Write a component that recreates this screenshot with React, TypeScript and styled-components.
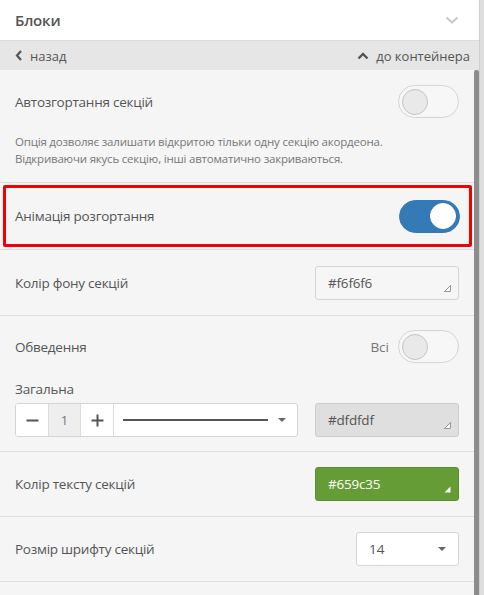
import React from "react";
import styled, { createGlobalStyle } from "styled-components";

const Global = createGlobalStyle`
  html, body { margin: 0; padding: 0; background: #f5f5f5; }
  body { font-family: "Open Sans", "Noto Sans", sans-serif; color: #555; }
  * { box-sizing: border-box; }
`;

const Frame = styled.div`
  width: 484px;
  height: 595px;
  display: flex;
  overflow: hidden;
  background: #f5f5f5;
`;

const MainCol = styled.div`
  width: 479px;
  display: flex;
  flex-direction: column;
`;

const EdgeStrip = styled.div`
  width: 5px;
  background: #dedede;
  border-left: 1px solid #cfcfcf;
`;

const Header = styled.div`
  height: 41px;
  background: #fff;
  border-bottom: 1px solid #dcdcdc;
  display: flex;
  align-items: center;
  justify-content: space-between;
  padding: 0 20px 0 15px;
`;

const HeaderTitle = styled.div`
  font-size: 15px;
  color: #555;
  font-weight: 600;
  letter-spacing: -0.2px;
`;

const NavBar = styled.div`
  height: 29px;
  background: #e6e6e6;
  display: flex;
  align-items: center;
  justify-content: space-between;
  padding: 0 9px 0 15px;
  font-size: 13px;
  color: #555;
`;

const NavLink = styled.div`
  display: flex;
  align-items: center;
  gap: 7px;
`;

const BodyRow = styled.div`
  flex: 1;
  display: flex;
  min-height: 0;
`;

const Content = styled.div`
  flex: 1;
  background: #f5f5f5;
  display: flex;
  flex-direction: column;
`;

const Thumb = styled.div`
  width: 5px;
  background: #8c8c8c;
  border-radius: 2px 2px 0 0;
`;

const Section = styled.div<{ $h?: number }>`
  border-bottom: 1px solid #dfdfdf;
  padding: 0 15px;
  display: flex;
  flex-direction: column;
  justify-content: center;
  height: ${(p) => (p.$h ? `${p.$h}px` : "auto")};
`;

const Row = styled.div`
  display: flex;
  align-items: center;
  justify-content: space-between;
`;

const Label = styled.div`
  font-size: 13.5px;
  color: #555;
  letter-spacing: -0.25px;
`;

const Help = styled.div`
  font-size: 11.5px;
  line-height: 17px;
  color: #777;
  letter-spacing: -0.2px;
  margin-top: 15px;
`;

const Highlight = styled.div`
  height: 67px;
  border-bottom: 1px solid #dfdfdf;
  padding: 2px 2px 2px 3px;
  display: flex;
`;

const RedBox = styled.div`
  flex: 1;
  border: 3px solid #f40000;
  border-radius: 2px;
  display: flex;
  align-items: center;
  justify-content: space-between;
  padding: 0 9px 0 9px;
`;

const Switch = styled.div<{ $on?: boolean }>`
  width: 61px;
  height: 33px;
  border-radius: 17px;
  background: ${(p) => (p.$on ? "#337ab7" : "#f7f7f7")};
  border: 1px solid ${(p) => (p.$on ? "#337ab7" : "#d4d4d4")};
  display: flex;
  align-items: center;
  justify-content: ${(p) => (p.$on ? "flex-end" : "flex-start")};
  padding: 0 3px;
`;

const Knob = styled.div<{ $on?: boolean }>`
  width: 26px;
  height: 26px;
  border-radius: 50%;
  background: ${(p) => (p.$on ? "#fff" : "#e9e9e9")};
  border: 1px solid ${(p) => (p.$on ? "#fff" : "#c4c4c4")};
`;

const RightGroup = styled.div`
  display: flex;
  align-items: center;
  gap: 9px;
`;

const SmallText = styled.span`
  font-size: 13.5px;
  color: #777;
`;

const ColorField = styled.div<{ $bg: string; $fg: string; $bd: string }>`
  position: relative;
  width: 144px;
  height: 34px;
  border-radius: 3px;
  background: ${(p) => p.$bg};
  color: ${(p) => p.$fg};
  border: 1px solid ${(p) => p.$bd};
  display: flex;
  align-items: center;
  padding: 0 12px;
  font-size: 13.5px;
  letter-spacing: -0.2px;
`;

const Corner = styled.svg`
  position: absolute;
  right: 6px;
  bottom: 6px;
`;

const SubLabel = styled.div`
  font-size: 13.5px;
  color: #555;
  margin: 17px 0 5px;
  letter-spacing: -0.2px;
`;

const ControlLine = styled.div`
  display: flex;
  justify-content: space-between;
  align-items: center;
`;

const Stepper = styled.div`
  width: 283px;
  height: 34px;
  display: flex;
  border: 1px solid #d4d4d4;
  border-radius: 3px;
  background: #fff;
  overflow: hidden;
`;

const StepBtn = styled.div`
  width: 33px;
  display: flex;
  align-items: center;
  justify-content: center;
  border-right: 1px solid #dcdcdc;
  background: #fff;
`;

const StepValue = styled.div`
  width: 32px;
  display: flex;
  align-items: center;
  justify-content: center;
  background: #eeeeee;
  border-right: 1px solid #dcdcdc;
  font-size: 13px;
  color: #777;
`;

const LineSelect = styled.div`
  flex: 1;
  display: flex;
  align-items: center;
  padding: 0 11px 0 9px;
  gap: 10px;
`;

const StyleLine = styled.div`
  flex: 1;
  height: 2px;
  background: #555;
`;

const Caret = styled.div`
  width: 0;
  height: 0;
  border-left: 4px solid transparent;
  border-right: 4px solid transparent;
  border-top: 4px solid #666;
`;

const SizeSelect = styled.div`
  width: 103px;
  height: 34px;
  background: #fff;
  border: 1px solid #d4d4d4;
  border-radius: 3px;
  display: flex;
  align-items: center;
  justify-content: space-between;
  padding: 0 12px 0 12px;
  font-size: 13.5px;
  color: #555;
`;

const CornerMark = ({ outlined }: { outlined?: boolean }) => (
  <Corner width="9" height="9" viewBox="0 0 9 9">
    <path
      d="M7.5 1.5 L7.5 7 Q7.5 7.5 7 7.5 L1.5 7.5 Z"
      fill="#fff"
      stroke={outlined ? "#8a8a8a" : "none"}
      strokeWidth="0.9"
      strokeLinejoin="round"
    />
  </Corner>
);

export default function App() {
  return (
    <>
      <Global />
      <Frame>
        <MainCol>
          <Header>
            <HeaderTitle>Блоки</HeaderTitle>
            <svg width="14" height="9" viewBox="0 0 14 9">
              <path d="M1.5 1.5 L7 6.5 L12.5 1.5" fill="none" stroke="#c8c8c8" strokeWidth="2" />
            </svg>
          </Header>
          <NavBar>
            <NavLink>
              <svg width="8" height="11" viewBox="0 0 8 11">
                <path d="M6 1 L2 5.5 L6 10" fill="none" stroke="#555" strokeWidth="2.2" />
              </svg>
              <span>назад</span>
            </NavLink>
            <NavLink>
              <svg width="12" height="8" viewBox="0 0 12 8">
                <path d="M1.5 6.5 L6 2 L10.5 6.5" fill="none" stroke="#555" strokeWidth="2.4" />
              </svg>
              <span>до контейнера</span>
            </NavLink>
          </NavBar>
          <BodyRow>
            <Content>
              <Section $h={113}>
                <Row>
                  <Label>Автозгортання секцій</Label>
                  <Switch>
                    <Knob />
                  </Switch>
                </Row>
                <Help>
                  Опція дозволяє залишати відкритою тільки одну секцію акордеона.
                  <br />
                  Відкриваючи якусь секцію, інші автоматично закриваються.
                </Help>
              </Section>
              <Highlight>
                <RedBox>
                  <Label>Анімація розгортання</Label>
                  <Switch $on>
                    <Knob $on />
                  </Switch>
                </RedBox>
              </Highlight>
              <Section $h={66}>
                <Row>
                  <Label>Колір фону секцій</Label>
                  <ColorField $bg="#f6f6f6" $fg="#555" $bd="#d4d4d4">
                    #f6f6f6
                    <CornerMark outlined />
                  </ColorField>
                </Row>
              </Section>
              <Section $h={136}>
                <Row>
                  <Label>Обведення</Label>
                  <RightGroup>
                    <SmallText>Всі</SmallText>
                    <Switch>
                      <Knob />
                    </Switch>
                  </RightGroup>
                </Row>
                <SubLabel>Загальна</SubLabel>
                <ControlLine>
                  <Stepper>
                    <StepBtn>
                      <svg width="13" height="13" viewBox="0 0 13 13">
                        <path d="M0.5 6.5 H12.5" stroke="#555" strokeWidth="2" />
                      </svg>
                    </StepBtn>
                    <StepValue>1</StepValue>
                    <StepBtn>
                      <svg width="13" height="13" viewBox="0 0 13 13">
                        <path d="M0.5 6.5 H12.5 M6.5 0.5 V12.5" stroke="#555" strokeWidth="2" />
                      </svg>
                    </StepBtn>
                    <LineSelect>
                      <StyleLine />
                      <Caret />
                    </LineSelect>
                  </Stepper>
                  <ColorField $bg="#dfdfdf" $fg="#555" $bd="#cccccc">
                    #dfdfdf
                    <CornerMark outlined />
                  </ColorField>
                </ControlLine>
              </Section>
              <Section $h={65}>
                <Row>
                  <Label>Колір тексту секцій</Label>
                  <ColorField $bg="#659c35" $fg="#fff" $bd="#5a8f2e">
                    #659c35
                    <CornerMark />
                  </ColorField>
                </Row>
              </Section>
              <Section $h={65}>
                <Row>
                  <Label>Розмір шрифту секцій</Label>
                  <SizeSelect>
                    <span>14</span>
                    <Caret />
                  </SizeSelect>
                </Row>
              </Section>
            </Content>
            <Thumb />
          </BodyRow>
        </MainCol>
        <EdgeStrip />
      </Frame>
    </>
  );
}
